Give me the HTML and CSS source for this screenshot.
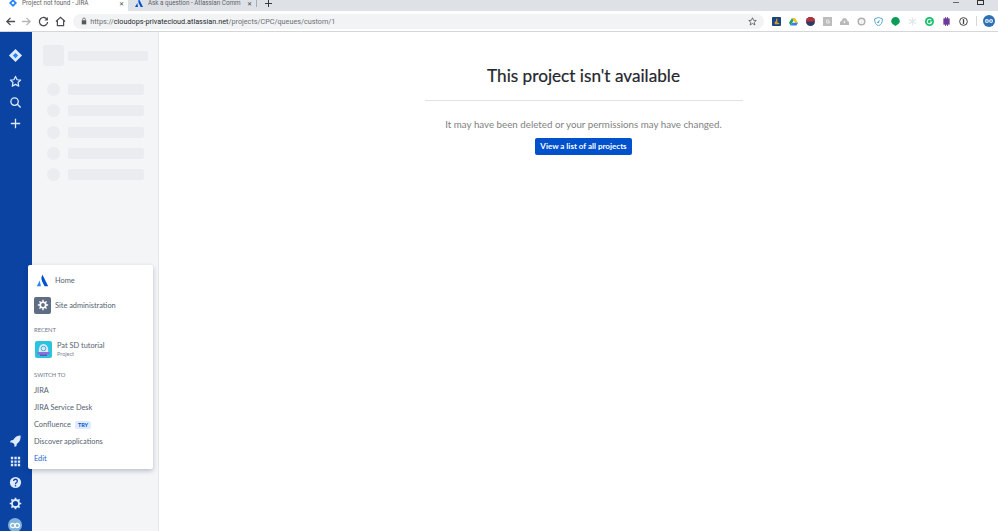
FILE: index.html
```html
<!DOCTYPE html>
<html>
	<head>
		<title>Project not found - JIRA</title>
		<meta charset="UTF-8">
		<link rel="stylesheet" href="styles.css">
	</head>
	<body>
		<div class="chrome">
			<div class="tabstrip">
				<div class="tab active">
					<svg class="favicon" viewBox="0 0 12 12"><path d="M6 0l6 6-6 6-6-6z" fill="#2684ff"/><path d="M6 3.6L8.400 6 6 8.400 3.600 6z" fill="#fff"/></svg>
					<span class="tabtitle">Project not found - JIRA</span>
					<span class="tabclose">✕</span>
				</div>
				<div class="tab second">
					<svg class="favicon" viewBox="0 0 12 12"><path d="M3.600 6L0 12h4.400zM6 0C4.500 2.500 4.700 4.500 6 7l2.500 5H12z" fill="#0052cc"/></svg>
					<span class="tabtitle">Ask a question - Atlassian Comm</span>
					<span class="tabclose">✕</span>
				</div>
				<span class="tabsep"></span>
				<svg class="newtab" viewBox="0 0 8 8"><path d="M4 0v8M0 4h8" stroke="#333" stroke-width="1.100"/></svg>
				<div class="winbtns">
					<span class="winmin"></span>
					<span class="winmax"></span>
				</div>
			</div>
			<div class="toolbar">
				<svg class="navicon" viewBox="0 0 12 12"><path d="M11 6H2M6 2L2 6l4 4" fill="none" stroke="#4a4d52" stroke-width="1.400"/></svg>
				<svg class="navicon" viewBox="0 0 12 12"><path d="M1 6h9M6 2l4 4-4 4" fill="none" stroke="#b4b6ba" stroke-width="1.400"/></svg>
				<svg class="navicon" viewBox="0 0 12 12"><path d="M10 4a4.500 4.500 0 1 0 .5 2.500" fill="none" stroke="#4a4d52" stroke-width="1.400"/><path d="M10.800 1v3.800H7z" fill="#4a4d52"/></svg>
				<svg class="navicon" viewBox="0 0 12 12"><path d="M1 6l5-4.500L11 6M2.600 5v5.500h6.800V5" fill="none" stroke="#4a4d52" stroke-width="1.300"/></svg>
				<div class="omnibox">
					<svg class="lock" viewBox="0 0 8 10"><path d="M1 4h6v5.500H1z" fill="#55585c"/><path d="M2.200 4V2.800a1.800 1.800 0 0 1 3.600 0V4" fill="none" stroke="#55585c"/></svg>
					<span class="url"><span class="urlmuted">https://</span>cloudops-privatecloud.atlassian.net<span class="urlmuted">/projects/CPC/queues/custom/1</span></span>
					<svg class="star" viewBox="0 0 12 12"><path d="M6 1l1.500 3.400 3.500.3-2.700 2.300.9 3.600L6 8.700l-3.200 1.900.9-3.600L1 4.700l3.500-.3z" fill="none" stroke="#4a4d52"/></svg>
				</div>
				<div class="extensions">
					<svg class="ext" viewBox="0 0 10 10"><rect width="10" height="10" rx="1" fill="#17457f"/><path d="M3 8V5h1.500v3zM4.500 8V2H6v6zM6 8V6.500h2V8z" fill="#d9992e"/></svg>
					<svg class="ext" viewBox="0 0 10 10"><path d="M3.300 1h3.400l3.300 5.500H6.700z" fill="#f4c020"/><path d="M3.300 1L0 6.500l1.700 3L5 4z" fill="#1ea362"/><path d="M1.700 9.500h6.600l1.700-3H3.400z" fill="#3d7ee8"/></svg>
					<svg class="ext" viewBox="0 0 10 10"><circle cx="5" cy="5" r="5" fill="#2e3a66"/><path d="M0 5a5 5 0 0 1 10 0z" fill="#b5323c"/></svg>
					<svg class="ext" viewBox="0 0 10 10"><rect width="10" height="10" fill="#bcbcbc"/><path d="M7 3.300H4v3.400h3V5H5.400" fill="none" stroke="#eee"/></svg>
					<svg class="ext" viewBox="0 0 10 10"><path d="M0 9a2.500 2.500 0 0 1 1.500-4.300C2 2.500 3.500 1 5 1s3 1.500 3.500 3.700A2.500 2.500 0 0 1 10 9z" fill="#b8b8b8"/><path d="M5 4v3M3.700 5.500h2.600" stroke="#eee"/></svg>
					<svg class="ext" viewBox="0 0 10 10"><circle cx="5" cy="5" r="3.700" fill="#f2f2f2" stroke="#b0b0b0" stroke-width="1.600"/></svg>
					<svg class="ext" viewBox="0 0 10 10"><path d="M5 .5l4.300 1.500c0 4-1 6.500-4.300 7.800C1.700 8.500.7 6 .7 2z" fill="#fff" stroke="#4a9fc4"/><path d="M3 6l4-3-2 4z" fill="#4a9fc4"/></svg>
					<svg class="ext" viewBox="0 0 10 10"><path d="M5 0a4.800 4.800 0 0 1 4.800 4.800C9.800 7.500 7 8.500 5 10 3 8.500.2 7.500.2 4.800A4.800 4.800 0 0 1 5 0z" fill="#0b9d58"/></svg>
					<svg class="ext" viewBox="0 0 10 10"><path d="M5 .5v9M1 2.500l8 5M9 2.500l-8 5" stroke="#e0e6eb" stroke-width="1.300"/></svg>
					<svg class="ext" viewBox="0 0 10 10"><circle cx="5" cy="5" r="5" fill="#15c26b"/><path d="M7 3.500A2.500 2.500 0 1 0 7.500 5.500H5.500" fill="none" stroke="#fff" stroke-width="1.200"/></svg>
					<svg class="ext" viewBox="0 0 10 10"><path d="M1.500 1.500h7v7h-7z" fill="#6a3d9a"/><path d="M3.500 0h1v10h-1zM5.500 0h1v10h-1z" fill="#6a3d9a"/></svg>
					<svg class="ext" viewBox="0 0 10 10"><circle cx="5" cy="5" r="4.300" fill="none" stroke="#444" stroke-width="1.100"/><path d="M5 2.300v5.400" stroke="#444" stroke-width="1.500"/></svg>
					<span class="extsep"></span>
					<svg class="avatar" viewBox="0 0 14 14"><circle cx="7" cy="7" r="7" fill="#2f6fb5"/><circle cx="4.600" cy="7" r="2.300" fill="#e8f0f8"/><circle cx="9.400" cy="7" r="2.300" fill="#e8f0f8"/><circle cx="4.600" cy="7" r="1" fill="#2f6fb5"/><circle cx="9.400" cy="7" r="1" fill="#2f6fb5"/></svg>
				</div>
			</div>
		</div>
		<div class="app">
			<div class="globalnav">
				<div class="navtop">
					<svg class="navlogo" viewBox="0 0 16 16"><path d="M8 1l7 7-7 7-7-7z" fill="#deebff"/><path d="M8 5.200L10.800 8 8 10.800 5.200 8z" fill="#2684ff"/></svg>
					<svg class="navglyph" viewBox="0 0 14 14"><path d="M7 1.500l1.700 3.600 3.800.4-2.800 2.600.8 3.900L7 10.100 3.500 12l.8-3.900-2.800-2.600 3.800-.4z" fill="none" stroke="#deebff" stroke-width="1.300" stroke-linejoin="round"/></svg>
					<svg class="navglyph" viewBox="0 0 14 14"><circle cx="6" cy="6" r="4" fill="none" stroke="#deebff" stroke-width="1.400"/><path d="M9 9l3.500 3.500" stroke="#deebff" stroke-width="1.500"/></svg>
					<svg class="navglyph" viewBox="0 0 14 14"><path d="M7 2v10M2 7h10" stroke="#deebff" stroke-width="1.400"/></svg>
				</div>
				<div class="navbottom">
					<svg class="navglyph" viewBox="0 0 14 14"><path d="M12.500 1.500c-3.500 0-6 1.500-8 5L2 7l-1 2 3 .3 1.700 1.700.3 3 2-1 .5-2.500c3.500-2 4-5 4-8.500z" fill="#deebff"/></svg>
					<svg class="navglyph" viewBox="0 0 14 14"><path d="M2 2h2.500v2.500H2zM5.800 2h2.500v2.500H5.800zM9.500 2H12v2.500H9.500zM2 5.800h2.500v2.500H2zM5.800 5.800h2.500v2.500H5.800zM9.500 5.800H12v2.500H9.500zM2 9.500h2.500V12H2zM5.800 9.500h2.500V12H5.800zM9.500 9.500H12V12H9.500z" fill="#deebff"/></svg>
					<svg class="navglyph" viewBox="0 0 14 14"><circle cx="7" cy="7" r="6" fill="#deebff"/><path d="M5 5.500A2 2 0 1 1 7.600 7.400C7 7.700 7 8 7 8.800" fill="none" stroke="#0b43a3" stroke-width="1.400"/><circle cx="7" cy="10.500" r=".9" fill="#0b43a3"/></svg>
					<svg class="navglyph" viewBox="0 0 14 14"><circle cx="7" cy="7" r="3.800" fill="none" stroke="#deebff" stroke-width="2"/><path d="M7 .8v2.400M7 10.800v2.400M.8 7h2.400M10.800 7h2.400M2.600 2.600l1.700 1.700M9.700 9.700l1.700 1.700M11.400 2.600L9.700 4.300M4.300 9.700l-1.700 1.700" stroke="#deebff" stroke-width="1.800"/></svg>
					<svg class="navavatar" viewBox="0 0 14 14"><circle cx="7" cy="7" r="7" fill="#7fb2dd"/><circle cx="4.800" cy="7.500" r="2.200" fill="none" stroke="#fff" stroke-width="1.200"/><circle cx="9.200" cy="7.500" r="2.200" fill="none" stroke="#fff" stroke-width="1.200"/></svg>
				</div>
			</div>
			<div class="sidebar">
				<div class="skelhead">
					<span class="skelsquare"></span>
					<span class="skeltitle"></span>
				</div>
				<div class="skelrow"><span class="skeldot"></span><span class="skelbar"></span></div>
				<div class="skelrow"><span class="skeldot"></span><span class="skelbar"></span></div>
				<div class="skelrow"><span class="skeldot"></span><span class="skelbar"></span></div>
				<div class="skelrow"><span class="skeldot"></span><span class="skelbar"></span></div>
				<div class="skelrow"><span class="skeldot"></span><span class="skelbar"></span></div>
			</div>
			<div class="main">
				<h1 class="errtitle">This project isn't available</h1>
				<p class="errtext">It may have been deleted or your permissions may have changed.</p>
				<a class="errbtn">View a list of all projects</a>
			</div>
			<div class="menu">
				<div class="menuitem first">
					<svg class="menuicon" viewBox="0 0 16 16"><path d="M4.700 8L1 15h5z" fill="#2684ff"/><path d="M8 1C6.200 4 6.300 6.500 7.600 9.200L10.500 15H15z" fill="#0052cc"/></svg>
					<span>Home</span>
				</div>
				<div class="menuitem admin">
					<span class="adminicon"><svg viewBox="0 0 14 14"><circle cx="7" cy="7" r="3.200" fill="none" stroke="#fff" stroke-width="2"/><path d="M7 1v2.400M7 10.600V13M1 7h2.400M10.600 7H13M2.800 2.800l1.700 1.700M9.500 9.500l1.700 1.700M11.200 2.800L9.500 4.500M4.500 9.500l-1.700 1.700" stroke="#fff" stroke-width="1.600"/></svg></span>
					<span>Site administration</span>
				</div>
				<div class="menulabel recent">RECENT</div>
				<div class="recentitem">
					<span class="projicon"><svg viewBox="0 0 17 17"><path d="M4 12c-1-5 1-9 4.500-9S14 7 13 12z" fill="#dfe7ff"/><circle cx="8.500" cy="7.500" r="2.300" fill="none" stroke="#38b5d8" stroke-width="1"/><path d="M2.500 11h12v2.500h-12z" fill="#8a6fd8"/><path d="M5 13.500h7v1.500H5z" fill="#6a4fb8"/></svg></span>
					<div class="recenttext">
						<div class="recentname">Pat SD tutorial</div>
						<div class="recenttype">Project</div>
					</div>
				</div>
				<div class="menulabel">SWITCH TO</div>
				<div class="switchitem">JIRA</div>
				<div class="switchitem">JIRA Service Desk</div>
				<div class="switchitem">Confluence <span class="trybadge">TRY</span></div>
				<div class="switchitem">Discover applications</div>
				<div class="switchitem editlink">Edit</div>
			</div>
		</div>
	</body>
</html>
```

FILE: styles.css
```css
html, body {
	margin: 0;
	height: 100%;
	overflow: hidden;
}
body {
	display: flex;
	flex-direction: column;
	font-family: "Lato", sans-serif;
	background: #fff;
}
.chrome {
	height: 32px;
	flex: none;
	background: #fff;
	border-bottom: 1px solid #d4d6da;
	box-sizing: border-box;
}
.tabstrip {
	height: 11px;
	background: #dee1e6;
	display: flex;
	align-items: flex-start;
}
.tab {
	width: 128px;
	height: 11px;
	display: flex;
	align-items: center;
	box-sizing: border-box;
	padding: 0 0 5px 9px;
	font-family: "Roboto", sans-serif;
	font-size: 6.300px;
	color: #5f6368;
}
.tab.active {
	background: #fff;
}
.tab.second {
	padding-left: 7px;
}
.favicon {
	width: 8px;
	height: 8px;
	flex: none;
	margin-right: 5px;
}
.tabtitle {
	flex: 1;
	white-space: nowrap;
}
.tabclose {
	font-size: 6px;
	color: #444;
	margin-right: 4px;
}
.tabsep {
	width: 1px;
	height: 7px;
	background: #a9acb1;
}
.newtab {
	width: 7px;
	height: 7px;
	margin-left: 8px;
}
.winbtns {
	margin-left: auto;
	display: flex;
	gap: 18px;
	padding-right: 14px;
}
.winmin {
	width: 6px;
	height: 1px;
	margin-top: 2px;
	background: #666;
}
.winmax {
	width: 5px;
	height: 3px;
	border: 1px solid #333;
}
.toolbar {
	height: 20px;
	display: flex;
	align-items: center;
	padding-left: 4.500px;
	gap: 5.700px;
}
.navicon {
	width: 11px;
	height: 11px;
	flex: none;
}
.omnibox {
	width: 691px;
	height: 15px;
	margin-left: 2px;
	border-radius: 8px;
	background: #f1f3f4;
	display: flex;
	align-items: center;
	padding: 0 6px 0 8px;
	box-sizing: border-box;
	font-family: "Roboto", sans-serif;
	font-size: 7.250px;
	color: #26282b;
}
.lock {
	width: 6px;
	height: 8px;
	margin-right: 3px;
}
.url {
	flex: 1;
}
.urlmuted {
	color: #6d7074;
}
.star {
	width: 9px;
	height: 9px;
	margin-right: 1px;
}
.extensions {
	display: flex;
	align-items: center;
	gap: 8px;
	margin-left: 2px;
}
.ext {
	width: 9px;
	height: 9px;
	flex: none;
}
.extsep {
	width: 1px;
	height: 10px;
	background: #d4d6da;
	margin: 0 -2px 0 0;
}
.avatar {
	width: 12px;
	height: 12px;
}
.app {
	flex: 1;
	display: flex;
	position: relative;
	min-height: 0;
}
.globalnav {
	width: 32px;
	flex: none;
	box-sizing: border-box;
	padding-right: 2px;
	background: #0b43a3;
	display: flex;
	flex-direction: column;
	justify-content: space-between;
	align-items: center;
}
.navtop, .navbottom {
	display: flex;
	flex-direction: column;
	align-items: center;
}
.navtop {
	padding-top: 16px;
	gap: 8px;
}
.navbottom {
	gap: 8px;
}
.navlogo {
	width: 15px;
	height: 15px;
	margin-bottom: 4px;
}
.navglyph {
	width: 13px;
	height: 13px;
}
.navavatar {
	width: 14px;
	height: 14px;
	margin-bottom: -1px;
}
.sidebar {
	width: 127px;
	flex: none;
	background: #f4f5f7;
	border-right: 1px solid #e4e6ea;
	box-sizing: border-box;
	padding: 13px 10px 0 11px;
}
.skelhead {
	display: flex;
	align-items: center;
	gap: 4px;
	margin-bottom: 17px;
}
.skelsquare {
	width: 21px;
	height: 21px;
	border-radius: 2px;
	background: #ebecf0;
}
.skeltitle {
	width: 81px;
	height: 10px;
	border-radius: 2px;
	background: #ebecf0;
}
.skelrow {
	display: flex;
	align-items: center;
	height: 13px;
	margin-bottom: 8.300px;
	padding-left: 4px;
	gap: 8px;
}
.skeldot {
	width: 13px;
	height: 13px;
	border-radius: 50%;
	background: #ebecf0;
}
.skelbar {
	width: 76px;
	height: 11px;
	border-radius: 2px;
	background: #ebecf0;
}
.main {
	flex: 1;
	display: flex;
	flex-direction: column;
	align-items: center;
	padding-left: 10px;
}
.errtitle {
	width: 318px;
	margin: 31px 0 0;
	padding-bottom: 12px;
	border-bottom: 1px solid #dfe1e6;
	text-align: center;
	font-size: 17.200px;
	line-height: 25px;
	font-weight: 400;
	color: #24272e;
	-webkit-text-stroke: .2px #24272e;
}
.errtext {
	margin: 16px 0 0;
	font-size: 9.750px;
	line-height: 14px;
	color: #7f7f7f;
}
.errbtn {
	margin-top: 7px;
	width: 97px;
	height: 17px;
	border-radius: 2px;
	background: #0052cc;
	color: #fff;
	font-size: 8px;
	font-weight: 700;
	line-height: 17px;
	text-align: center;
}
.menu {
	position: absolute;
	left: 28px;
	top: 233px;
	width: 125px;
	height: 204px;
	background: #fff;
	border-radius: 2px;
	box-shadow: 0 2px 5px rgba(9, 30, 66, .25);
	box-sizing: border-box;
	font-size: 7.400px;
	color: #555f6f;
}
.menuitem {
	display: flex;
	align-items: center;
	gap: 6px;
	padding-left: 6px;
}
.menuitem.first {
	height: 30px;
	padding-left: 8px;
	gap: 6px;
}
.menuitem.admin {
	height: 22px;
	margin-top: -1px;
	gap: 4px;
}
.menuicon {
	width: 13px;
	height: 13px;
}
.adminicon {
	width: 17px;
	height: 17px;
	border-radius: 2px;
	background: #5e6c84;
	display: flex;
	align-items: center;
	justify-content: center;
}
.adminicon svg {
	width: 12px;
	height: 12px;
}
.menulabel {
	padding-left: 6px;
	font-size: 5.800px;
	line-height: 8px;
	color: #6b778c;
}
.menulabel.recent {
	margin-top: 10px;
}
.recentitem {
	display: flex;
	align-items: center;
	gap: 5px;
	padding-left: 7px;
	height: 22px;
	margin-top: 4.500px;
	margin-bottom: 10.500px;
}
.projicon {
	width: 17px;
	height: 17px;
	border-radius: 2px;
	background: #29c4dd;
	display: block;
}
.projicon svg {
	display: block;
	width: 17px;
	height: 17px;
}
.recentname {
	line-height: 10px;
}
.recenttype {
	font-size: 5.500px;
	line-height: 7px;
	color: #7a869a;
}
.switchitem {
	padding-left: 6px;
	height: 17px;
	line-height: 17px;
	white-space: nowrap;
}
.menulabel + .switchitem {
	margin-top: 2.500px;
}
.trybadge {
	display: inline-block;
	margin-left: 2px;
	padding: 0 3px;
	line-height: 8px;
	font-size: 5.500px;
	font-weight: 700;
	color: #0052cc;
	background: #deebff;
	border-radius: 2px;
}
.switchitem.editlink {
	color: #1f64d0;
}
```
